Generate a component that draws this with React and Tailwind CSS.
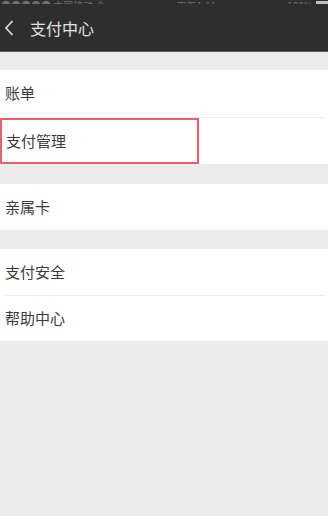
export default function App() {
  const font = { fontFamily: '"Noto Sans CJK SC", "Noto Sans", sans-serif' };
  return (
    <div className="w-[328px] h-[516px] bg-[#ebebeb] overflow-hidden" style={font}>
      <div className="h-[51px] bg-[#2e2e2e] relative">
        <div className="h-[4px] overflow-hidden flex items-end justify-between text-[10px] leading-[10px] text-[#6f6f6f]">
          <span className="pl-[1px] -mb-[7px]">●●●●● 中国移动 令</span>
          <span className="-mb-[7px]">下午1:11</span>
          <span className="flex items-end -mb-[7px]">
            100%
            <span className="ml-[3px] inline-block w-[12px] h-[10px] bg-[#bdbdbd]"></span>
          </span>
        </div>
        <div className="flex items-center h-[47px]">
          <svg width="12" height="18" viewBox="0 0 12 18" className="ml-[3px]">
            <path d="M9.5 2 L3 9 L9.5 16" fill="none" stroke="#dcdcdc" strokeWidth="1.7" />
          </svg>
          <span className="ml-[15px] text-[16px] text-[#e2e2e2] leading-none">支付中心</span>
        </div>
      </div>
      <div className="h-[1px] bg-[#5a5a5a]"></div>
      <div className="h-[18px]"></div>
      <div className="bg-white">
        <div className="h-[47px] flex items-center pl-[5px] text-[15px] text-[#3a3a3a]">账单</div>
        <div className="ml-[5px] mr-[3px] h-[1px] bg-[#ececec]"></div>
        <div className="h-[46px] w-[199px] flex items-center pl-[4px] text-[15px] text-[#3a3a3a] border-2 border-[#ec6069]">支付管理</div>
      </div>
      <div className="h-[20px]"></div>
      <div className="bg-white">
        <div className="h-[46px] flex items-center pl-[5px] text-[15px] text-[#3a3a3a]">亲属卡</div>
      </div>
      <div className="h-[19px]"></div>
      <div className="bg-white">
        <div className="h-[46px] flex items-center pl-[5px] text-[15px] text-[#3a3a3a]">支付安全</div>
        <div className="ml-[5px] mr-[3px] h-[1px] bg-[#ececec]"></div>
        <div className="h-[45px] flex items-center pl-[5px] text-[15px] text-[#3a3a3a]">帮助中心</div>
      </div>
    </div>
  );
}
